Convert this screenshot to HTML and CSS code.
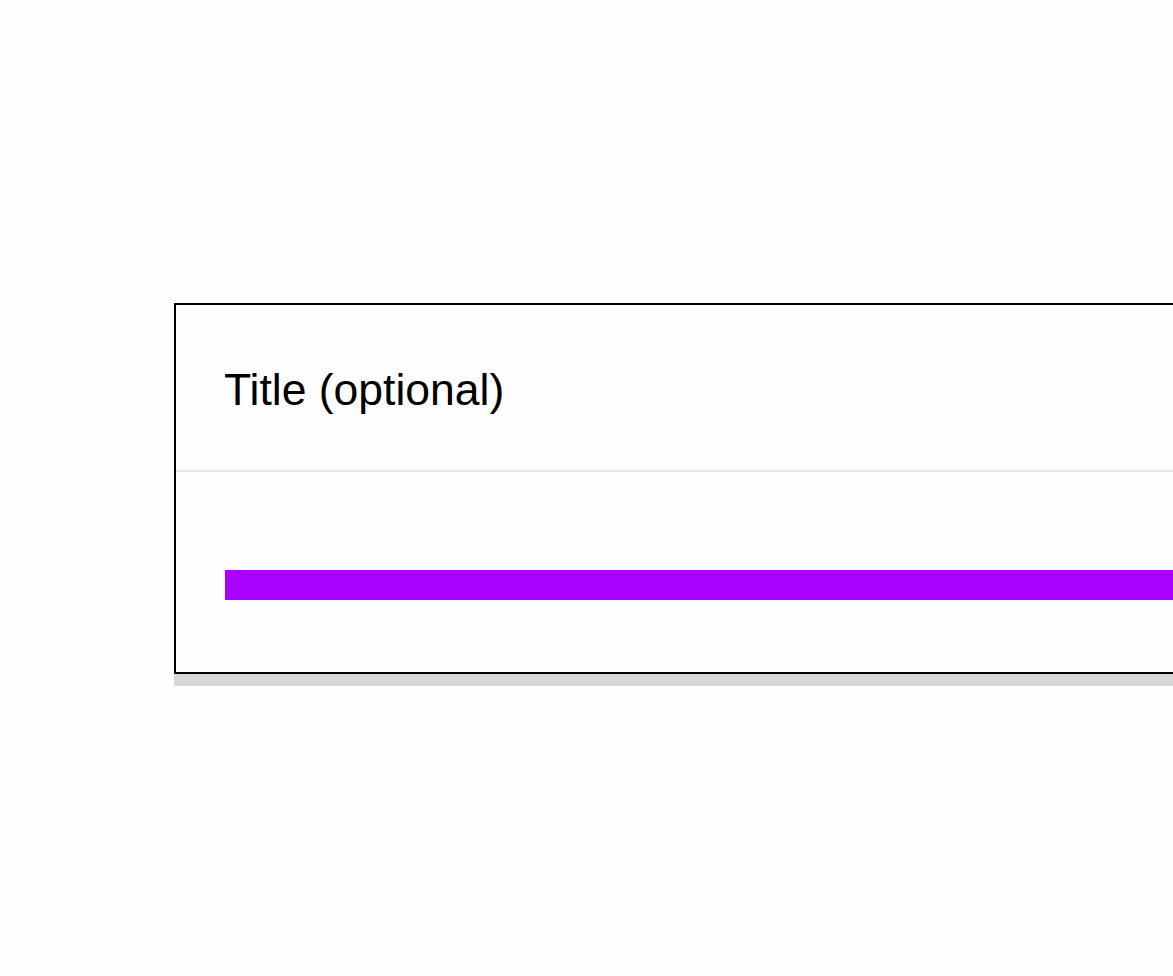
FILE: index.html
```html
<!DOCTYPE html>
<html lang="en">
<head>
<meta charset="utf-8">
<title>Card</title>
<link rel="stylesheet" href="styles.css">
</head>
<body>
<main class="stage">
  <div class="card-frame">
    <section class="card">
      <header class="card-header">
        <h1 class="card-title">Title (optional)</h1>
      </header>
      <div class="card-body">
        <div class="bar"></div>
      </div>
    </section>
  </div>
</main>
</body>
</html>
```

FILE: styles.css
```css
html, body {
  margin: 0;
  padding: 0;
  background: #fefefe;
  font-family: "Liberation Sans", Arial, sans-serif;
}

.stage {
  padding: 303px 0 0 174px;
  width: 999px;
  height: 673px;
  overflow: hidden;
}

.card-frame {
  width: 1100px;
  border-bottom: 12px solid #d6d6d6;
}

.card {
  border: 2px solid #000;
  background: #fefefe;
}

.card-header {
  box-sizing: border-box;
  height: 167px;
  display: flex;
  align-items: center;
  padding: 4px 48px 0;
  border-bottom: 2px solid #e5e5e5;
}

.card-title {
  margin: 0;
  font-size: 44.5px;
  font-weight: 400;
  color: #000;
  line-height: 1.2;
}

.card-body {
  box-sizing: border-box;
  height: 200px;
  padding: 98px 0 0 49px;
}

.bar {
  height: 30px;
  background: #aa00ff;
}
```
